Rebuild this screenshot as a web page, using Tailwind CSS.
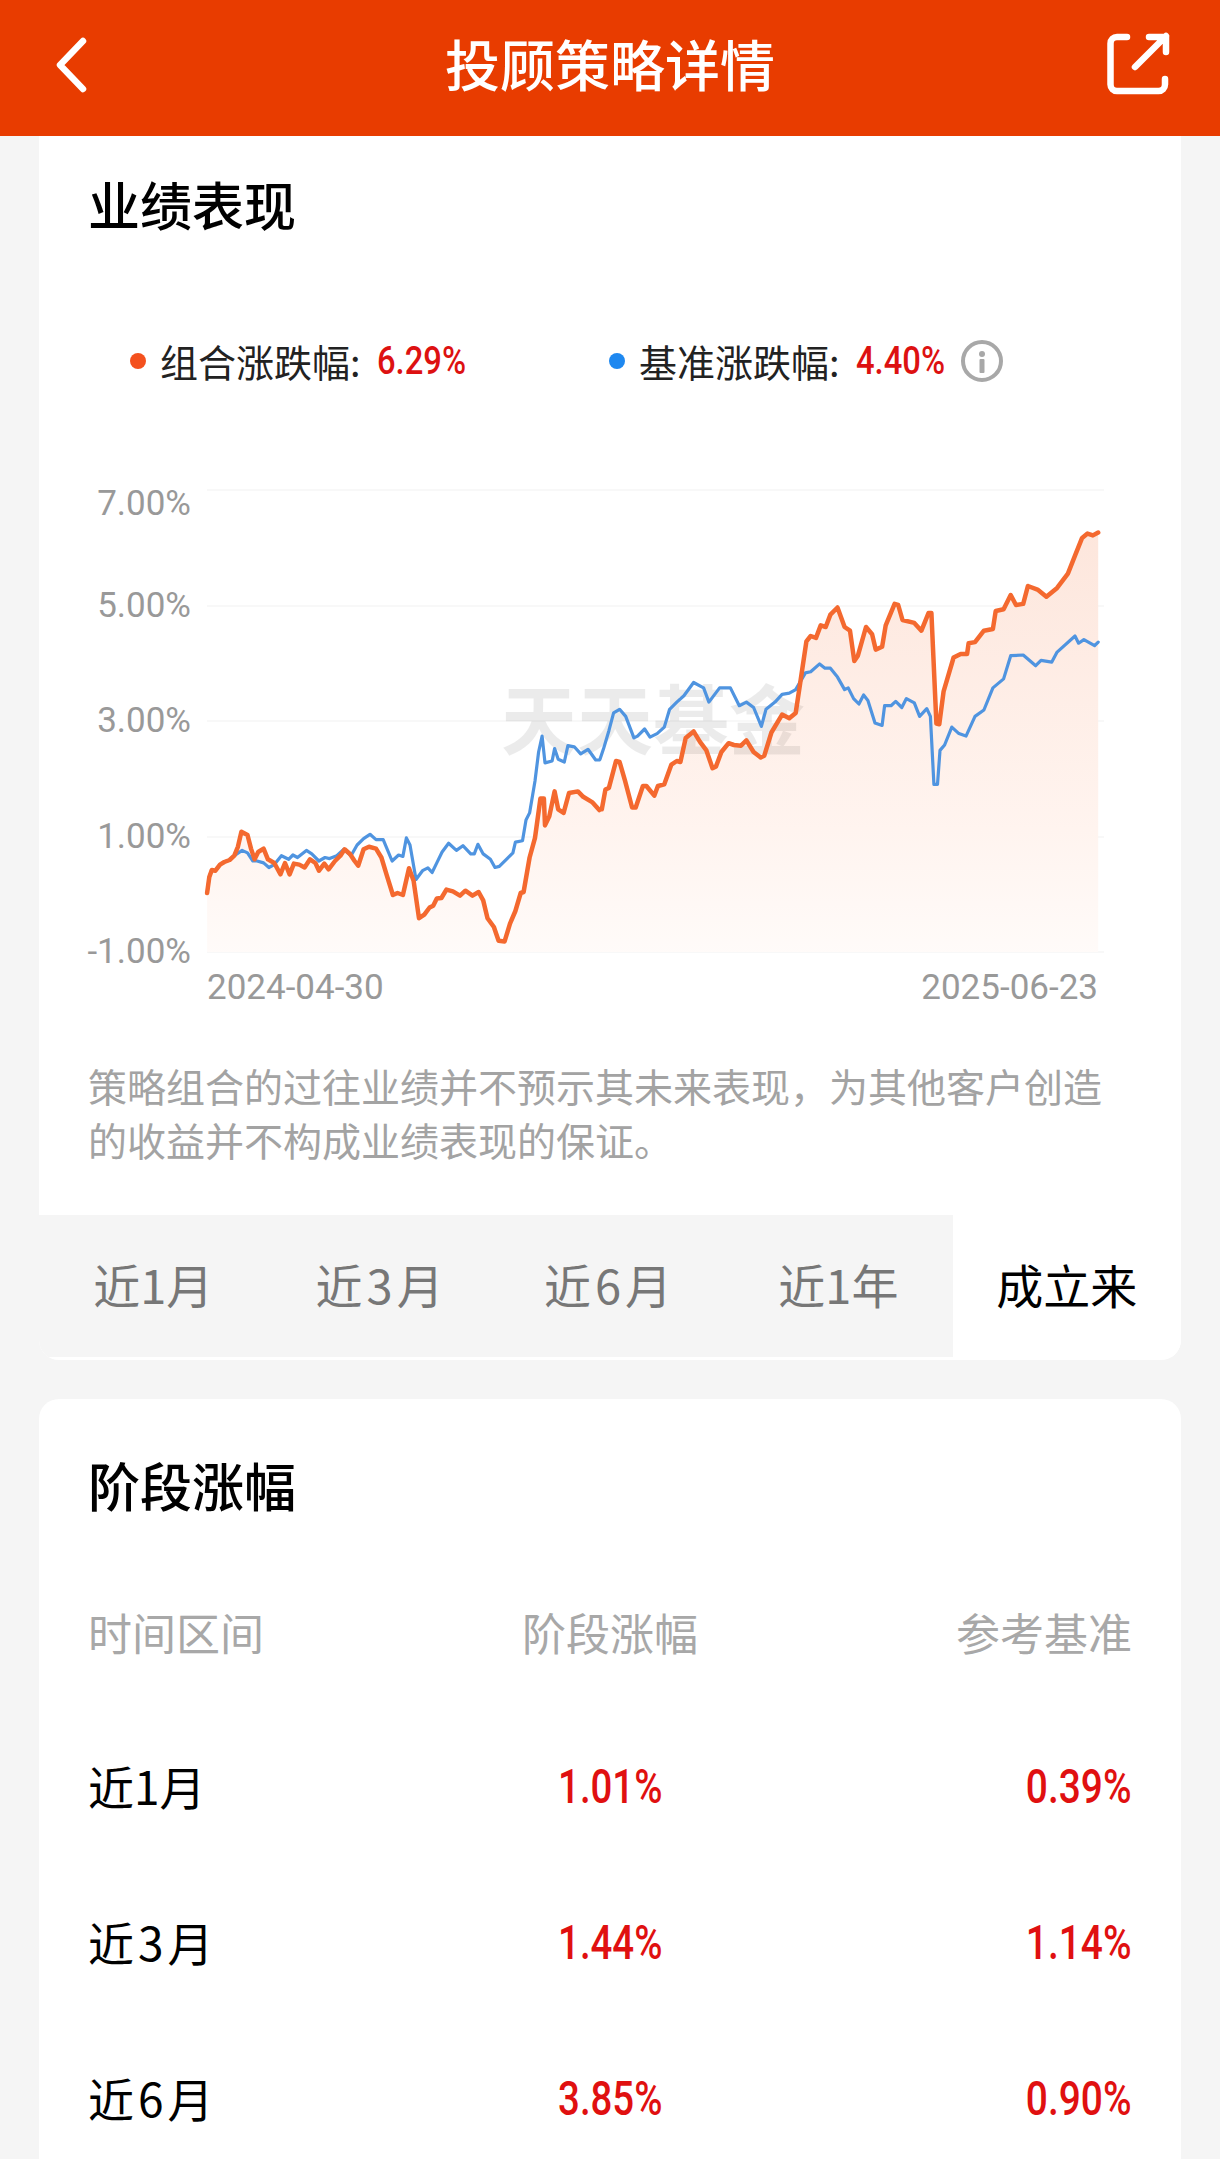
<!DOCTYPE html>
<html lang="zh-CN">
<head>
<meta charset="utf-8">
<script src="https://cdn.jsdelivr.net/npm/@tailwindcss/browser@4"></script>
</head>
<body class="bg-[#f5f5f5]">
<div class="h-[2159px] w-[1220px] overflow-hidden bg-[#f5f5f5] font-['Noto_Sans_CJK_SC','Noto_Sans',sans-serif]">
  <header class="relative flex h-[136px] items-start justify-center bg-[#e83c00] pt-[24px]">
    <svg class="absolute left-[50px] top-[32px]" width="44" height="66" viewBox="0 0 44 66" fill="none" stroke="#fff" stroke-width="6.5" stroke-linecap="round" stroke-linejoin="round"><path d="M33 9 L10 33 L33 57"/></svg>
    <h1 class="text-[55px] leading-[76px] font-medium text-white">投顾策略详情</h1>
    <svg class="absolute left-[1100px] top-[24px]" width="80" height="80" viewBox="0 0 80 80" fill="none" stroke="#fff" stroke-width="6.5" stroke-linecap="round" stroke-linejoin="round"><path d="M27 13 H17 a6.5 6.5 0 0 0 -6.5 6.5 V60.5 a6.5 6.5 0 0 0 6.5 6.5 H58.5 a6.5 6.5 0 0 0 6.5 -6.5 V55"/><path d="M35 43 L66 12 M49 13 H66 V28"/></svg>
  </header>
  <main class="px-[39px]">
    <section class="overflow-hidden rounded-b-[20px] bg-white pb-[3px]">
      <h2 class="pl-[49px] pt-[33px] text-[52px] leading-[70px] font-medium text-black">业绩表现</h2>
      <div class="relative mt-[92px] h-[60px] text-[38px] leading-[60px] text-[#222]">
        <div class="absolute left-[91px] top-0 flex items-center">
          <span class="mr-[14px] size-[16px] rounded-full bg-[#f4511e]"></span>
          <span>组合涨跌幅:</span>
          <span class="ml-[16px] inline-block w-[88px] origin-left scale-x-[0.84] whitespace-nowrap font-['Roboto',sans-serif] text-[39px] font-medium text-[#dd1111]">6.29%</span>
        </div>
        <div class="absolute left-[570px] top-0 flex items-center">
          <span class="mr-[14px] size-[16px] rounded-full bg-[#1e88f0]"></span>
          <span>基准涨跌幅:</span>
          <span class="ml-[16px] inline-block w-[88px] origin-left scale-x-[0.84] whitespace-nowrap font-['Roboto',sans-serif] text-[39px] font-medium text-[#dd1111]">4.40%</span>
          <svg class="ml-[16px]" width="44" height="44" viewBox="0 0 44 44" fill="none"><circle cx="22" cy="22" r="19" stroke="#a8a8a8" stroke-width="4"/><circle cx="22" cy="15" r="3" fill="#a8a8a8"/><rect x="19.5" y="20" width="5" height="14" rx="1" fill="#a8a8a8"/></svg>
        </div>
      </div>
      <div class="relative mt-[79px] h-[588px]">
        <svg class="absolute -left-[39px] top-0" width="1220" height="560" viewBox="0 470 1220 560" fill="none">
          <defs>
            <linearGradient id="area" gradientUnits="userSpaceOnUse" x1="0" y1="530" x2="0" y2="1030">
              <stop offset="0" stop-color="#fde6dc"/>
              <stop offset="0.6" stop-color="#fff4ef"/>
              <stop offset="1" stop-color="#ffffff"/>
            </linearGradient>
          </defs>
          <g stroke="#f6f6f6" stroke-width="1.5">
            <path d="M207 490 H1104 M207 606 H1104 M207 721 H1104 M207 837 H1104 M207 952 H1104"/>
          </g>
          <path fill="url(#area)" d="M207.1 893 L209.3 877 L211.8 870 L215.4 870.7 L220 864.6 L224.3 862 L229.6 860 L234.3 855.7 L237.9 846.8 L241.4 831.8 L247.5 835 L251 848.6 L254.6 859.3 L258.2 852 L263.6 848.6 L267.9 859.3 L274.3 863 L280.4 874.3 L285 863 L289.6 874.3 L293.9 863.6 L299.3 864.6 L304.6 867.5 L310 859.3 L315.4 863 L319 870.7 L324.3 863.6 L328.6 869.3 L335 861 L340.4 855.7 L344.6 849.3 L350 854 L354.6 861 L358.2 865.7 L363.6 849.3 L369 846.8 L376 848.6 L381.4 857.5 L386.8 875.4 L392.9 895 L397.5 893 L402.9 895 L409 868.3 L413.6 880.7 L419 918.2 L424.3 914.6 L429.6 907.5 L433.2 905.7 L436.8 898.6 L441.4 898 L446.4 889.6 L452.9 891.4 L460 895.7 L465.4 890.7 L472.5 895.7 L478.6 892 L483.2 900.4 L487.5 918.2 L493.9 927 L498.6 940.7 L504.6 941.4 L510 923.6 L515.4 911 L520.7 893 L523.6 892 L529.6 857.5 L535 837.9 L540.4 798.6 L543.9 798.6 L545 825.4 L549.3 816.4 L554.6 791.4 L558.2 809.3 L563.6 812.9 L569 793 L577.9 791.4 L583.2 796.8 L592.1 802.1 L599.3 810 L600 809.3 L601.8 809.3 L605.4 789.6 L608.9 787.9 L616 761 L619.6 762 L625 780.7 L632.1 807.5 L635.7 807.5 L642.9 786 L646.4 786 L654.3 795.7 L657.9 786 L664.3 784.3 L671.4 764.6 L676.8 761 L680.4 762 L685.7 737.9 L693.6 731.4 L700 741.9 L706.4 750.4 L712.5 768.2 L716 766.4 L721.4 752 L728.6 743.2 L733.9 745 L741 745.7 L746.4 740.4 L753.6 752 L760.7 757.5 L764.3 755.7 L771.4 732.5 L782.1 714.6 L789.3 718.2 L795.7 712.9 L800 684.3 L806.4 641.4 L810.7 636 L816 637.9 L820.7 625.4 L825.7 627 L830.4 614.6 L837.5 607.5 L844.6 627 L850 630.7 L854.3 661 L857.9 655.7 L866 627 L872.1 634.3 L875.7 649.6 L882.1 646.8 L885.7 625.4 L894.6 603.9 L898.2 605 L902.5 620 L914.3 622.9 L921.4 630.7 L928.6 612.9 L931.4 612.9 L936.4 723.6 L939.3 724.3 L943.6 691.4 L953.6 657.5 L960.7 653.9 L967.1 653.9 L968.6 643.2 L975 642.1 L983.9 630.7 L992.9 629 L995.7 611 L1003.6 609.3 L1010.7 595 L1016 605 L1023.2 603.9 L1027.9 586 L1037.5 589.6 L1046.4 596.8 L1057.1 587.9 L1067.9 573.6 L1075 555.7 L1082.1 537.9 L1087.5 533.6 L1092.9 535.4 L1098.2 532.5 L1098.2 952 L207.1 952 Z"/>
          <text x="501" y="749" font-size="76" font-weight="700" fill="#000" fill-opacity="0.08" font-family="'Noto Sans CJK SC',serif">天天基金</text>
          <g stroke-linejoin="round" stroke-linecap="round">
            <polyline stroke="#4f94e0" stroke-width="3.2" points="207.1 893 209.3 877 211.8 870 215.4 870.7 220 864.6 224.3 862 229.6 860 234.3 855.7 242.1 850.4 247.5 852.9 252.9 861 257.1 861 263.6 862.9 268.9 867.5 274.3 864.6 281.4 855.7 288.6 859.3 292.9 855 297.5 857.5 306.4 850.4 311.8 853.9 318.9 861 325 857.5 329.6 858.6 336.8 855.7 343.9 849.3 351 855.7 357.1 845 363.6 838.6 370 834.3 376 839.6 383.2 839.6 392.1 861 398.6 855 402.9 856.4 406.4 837.9 410 845 416 879.5 422.5 870.7 427.9 867.9 432.1 872.5 436.8 862.9 442.1 852 448.6 843.2 456.4 850.4 462.9 845.7 470.7 853.9 474.3 853.9 477.9 844.3 483.2 853.9 490.4 859.3 495 867.5 499.3 866.4 506.4 859.3 512.9 852.9 515.4 842.1 522.5 840.7 526 820 529.6 812.9 535 781 538.6 752 542.1 736.1 545 762.9 552.1 761 554.6 748.6 558.2 759.3 564.3 762 567.9 745.7 574.3 746.8 580.7 753.9 588 749.3 595.7 760 599.3 760 600 759.3 603.6 748.6 608.9 730.7 613.6 712.9 619.6 709.3 625.7 716.4 633.9 737.9 637.5 736.1 644.6 729 650 737.1 657.1 733.6 664.3 727.1 669.6 709.3 676.8 702.1 683.9 695.7 693.6 682.5 703.6 687.9 708.9 702.1 719.6 687.9 730.4 687.9 739.3 705.7 746.4 702.1 753.6 707.5 761.4 726.4 766 709.3 775 702.1 782.1 694.3 789.3 693.2 795.7 689.6 805.4 672.9 810.7 671.8 819.6 663.9 825 668.2 830.4 668.2 837.5 677.1 844.6 689.6 848.2 687.9 853.6 698.6 858.9 704 863.6 695 867.9 700.4 875 722.9 882.1 725.4 884.6 705.7 891 705.7 895.7 701.4 901.8 707.5 906.4 698.6 914.3 702.9 919.6 716.4 926.8 708.6 930.4 716.4 933.9 784.3 937.5 784.3 940 750.4 944.6 745 951.8 727.1 958.9 733.6 966 736.1 975 716.4 983.9 710 992.9 687.9 1003.6 678.9 1010.7 655.7 1023.2 655 1035.7 665.7 1041 660.4 1051.8 662.1 1057.1 652.1 1075 636 1078.6 643.2 1083.9 639.6 1094.6 645.7 1098.2 642.1"/>
            <polyline stroke="#f4692f" stroke-width="4.5" points="207.1 893 209.3 877 211.8 870 215.4 870.7 220 864.6 224.3 862 229.6 860 234.3 855.7 237.9 846.8 241.4 831.8 247.5 835 251 848.6 254.6 859.3 258.2 852 263.6 848.6 267.9 859.3 274.3 863 280.4 874.3 285 863 289.6 874.3 293.9 863.6 299.3 864.6 304.6 867.5 310 859.3 315.4 863 319 870.7 324.3 863.6 328.6 869.3 335 861 340.4 855.7 344.6 849.3 350 854 354.6 861 358.2 865.7 363.6 849.3 369 846.8 376 848.6 381.4 857.5 386.8 875.4 392.9 895 397.5 893 402.9 895 409 868.3 413.6 880.7 419 918.2 424.3 914.6 429.6 907.5 433.2 905.7 436.8 898.6 441.4 898 446.4 889.6 452.9 891.4 460 895.7 465.4 890.7 472.5 895.7 478.6 892 483.2 900.4 487.5 918.2 493.9 927 498.6 940.7 504.6 941.4 510 923.6 515.4 911 520.7 893 523.6 892 529.6 857.5 535 837.9 540.4 798.6 543.9 798.6 545 825.4 549.3 816.4 554.6 791.4 558.2 809.3 563.6 812.9 569 793 577.9 791.4 583.2 796.8 592.1 802.1 599.3 810 600 809.3 601.8 809.3 605.4 789.6 608.9 787.9 616 761 619.6 762 625 780.7 632.1 807.5 635.7 807.5 642.9 786 646.4 786 654.3 795.7 657.9 786 664.3 784.3 671.4 764.6 676.8 761 680.4 762 685.7 737.9 693.6 731.4 700 741.9 706.4 750.4 712.5 768.2 716 766.4 721.4 752 728.6 743.2 733.9 745 741 745.7 746.4 740.4 753.6 752 760.7 757.5 764.3 755.7 771.4 732.5 782.1 714.6 789.3 718.2 795.7 712.9 800 684.3 806.4 641.4 810.7 636 816 637.9 820.7 625.4 825.7 627 830.4 614.6 837.5 607.5 844.6 627 850 630.7 854.3 661 857.9 655.7 866 627 872.1 634.3 875.7 649.6 882.1 646.8 885.7 625.4 894.6 603.9 898.2 605 902.5 620 914.3 622.9 921.4 630.7 928.6 612.9 931.4 612.9 936.4 723.6 939.3 724.3 943.6 691.4 953.6 657.5 960.7 653.9 967.1 653.9 968.6 643.2 975 642.1 983.9 630.7 992.9 629 995.7 611 1003.6 609.3 1010.7 595 1016 605 1023.2 603.9 1027.9 586 1037.5 589.6 1046.4 596.8 1057.1 587.9 1067.9 573.6 1075 555.7 1082.1 537.9 1087.5 533.6 1092.9 535.4 1098.2 532.5"/>
          </g>
        </svg>
        <div class="absolute left-0 top-[18px] h-[32px] w-[152px] text-right font-['Roboto',sans-serif] text-[35px] leading-[32px] text-[#999]">7.00%</div>
        <div class="absolute left-0 top-[120px] h-[32px] w-[152px] text-right font-['Roboto',sans-serif] text-[35px] leading-[32px] text-[#999]">5.00%</div>
        <div class="absolute left-0 top-[235px] h-[32px] w-[152px] text-right font-['Roboto',sans-serif] text-[35px] leading-[32px] text-[#999]">3.00%</div>
        <div class="absolute left-0 top-[351px] h-[32px] w-[152px] text-right font-['Roboto',sans-serif] text-[35px] leading-[32px] text-[#999]">1.00%</div>
        <div class="absolute left-0 top-[466px] h-[32px] w-[152px] text-right font-['Roboto',sans-serif] text-[35px] leading-[32px] text-[#999]">-1.00%</div>
        <div class="absolute left-[168px] top-[502px] font-['Roboto',sans-serif] text-[35px] leading-[32px] text-[#999]">2024-04-30</div>
        <div class="absolute right-[83px] top-[502px] font-['Roboto',sans-serif] text-[35px] leading-[32px] text-[#999]">2025-06-23</div>
      </div>
      <p class="pl-[49px] text-[39px] leading-[54px] text-[#a3a3a3]">策略组合的过往业绩并不预示其未来表现，为其他客户创造<br>的收益并不构成业绩表现的保证。</p>
      <div class="mt-[49px] grid h-[142px] grid-cols-5 items-center text-center text-[47px] text-[#777]">
        <div class="flex h-full items-center justify-center bg-[#f5f5f5] pb-[3px]">近1月</div>
        <div class="flex h-full items-center justify-center bg-[#f5f5f5] pb-[3px] tracking-[4px]">近3月</div>
        <div class="flex h-full items-center justify-center bg-[#f5f5f5] pb-[3px] tracking-[4px]">近6月</div>
        <div class="flex h-full items-center justify-center bg-[#f5f5f5] pb-[3px]">近1年</div>
        <div class="flex h-full items-center justify-center bg-white pb-[3px] text-black">成立来</div>
      </div>
    </section>
    <section class="mt-[39px] rounded-t-[20px] bg-white pb-[120px] pl-[49px] pr-[49px]">
      <h2 class="pt-[51px] text-[52px] leading-[70px] font-medium text-black">阶段涨幅</h2>
      <div class="mt-[81px] grid h-[62px] grid-cols-3 items-center text-[44px] leading-[62px] text-[#a8a8a8]">
        <div>时间区间</div><div class="text-center">阶段涨幅</div><div class="text-right">参考基准</div>
      </div>
      <div class="mt-[89px] grid h-[62px] grid-cols-3 items-center text-[46px] leading-[62px] text-black">
        <div>近1月</div>
        <div class="text-center"><span class="inline-block scale-x-[0.8] font-['Roboto',sans-serif] text-[48px] font-medium text-[#e01010]">1.01%</span></div>
        <div class="text-right"><span class="inline-block origin-right scale-x-[0.81] font-['Roboto',sans-serif] text-[48px] font-medium text-[#e01010]">0.39%</span></div>
      </div>
      <div class="mt-[94px] grid h-[62px] grid-cols-3 items-center text-[46px] leading-[62px] text-black">
        <div class="tracking-[4px]">近3月</div>
        <div class="text-center"><span class="inline-block scale-x-[0.8] font-['Roboto',sans-serif] text-[48px] font-medium text-[#e01010]">1.44%</span></div>
        <div class="text-right"><span class="inline-block origin-right scale-x-[0.81] font-['Roboto',sans-serif] text-[48px] font-medium text-[#e01010]">1.14%</span></div>
      </div>
      <div class="mt-[94px] grid h-[62px] grid-cols-3 items-center text-[46px] leading-[62px] text-black">
        <div class="tracking-[4px]">近6月</div>
        <div class="text-center"><span class="inline-block scale-x-[0.8] font-['Roboto',sans-serif] text-[48px] font-medium text-[#e01010]">3.85%</span></div>
        <div class="text-right"><span class="inline-block origin-right scale-x-[0.81] font-['Roboto',sans-serif] text-[48px] font-medium text-[#e01010]">0.90%</span></div>
      </div>
    </section>
  </main>
</div>
</body>
</html>
